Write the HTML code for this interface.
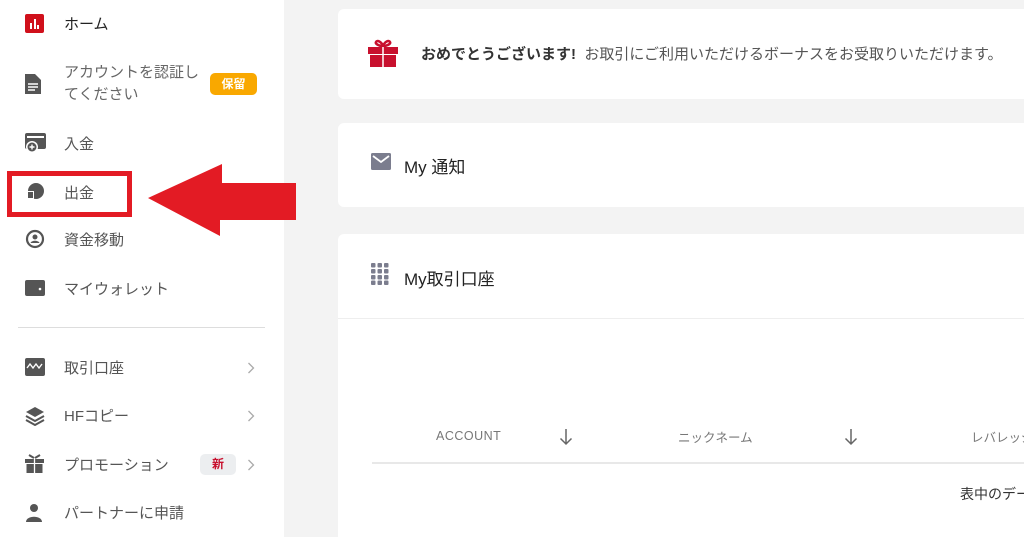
<!DOCTYPE html>
<html><head><meta charset="utf-8"><style>
*{margin:0;padding:0;box-sizing:border-box}
html,body{width:1024px;height:537px;overflow:hidden}
body{background:#f3f3f3;font-family:"Liberation Sans","Noto Sans CJK JP",sans-serif;position:relative}
.side{position:absolute;left:0;top:0;width:284px;height:537px;background:#fff}
.it{position:absolute;left:64px;font-size:15px;color:#555}
.ic{position:absolute;left:25px}
.chev{position:absolute;left:247px}
.card{position:absolute;left:338px;width:700px;background:#fff;border-radius:6px}
.abs{position:absolute}
</style></head><body>
<div class="side">
<div class="ic" style="top:14px;width:19px;height:19px;background:#d0101b;border-radius:2px"><div class="abs" style="left:5px;top:9px;width:2px;height:6px;background:#fff"></div><div class="abs" style="left:8.5px;top:5px;width:2px;height:10px;background:#fff"></div><div class="abs" style="left:12px;top:11px;width:2px;height:4px;background:#fff"></div></div>
<div class="it" style="top:13px;color:#222">ホーム</div>
<svg class="ic" style="top:74px" width="16" height="20" viewBox="0 0 16 20"><path d="M0 0h10l6 6v14H0z" fill="#555"/><path d="M3 10h10M3 13h10M3 16h7" stroke="#fff" stroke-width="1.5"/></svg>
<div class="it" style="top:62px;line-height:22px;color:#666">アカウントを認証し<br>てください</div>
<div class="abs" style="left:210px;top:73px;width:47px;height:22px;background:#f9a800;border-radius:5px;color:#fff;font-size:12px;text-align:center;line-height:22px;font-weight:bold">保留</div>
<svg class="ic" style="top:133px" width="22" height="20" viewBox="0 0 22 20"><rect x="0" y="0" width="21" height="16" rx="2" fill="#555"/><rect x="2" y="3" width="17" height="2" fill="#fff"/><circle cx="7" cy="14" r="6" fill="#fff"/><circle cx="7" cy="14" r="4.5" fill="#555"/><path d="M7 11.5v5M4.5 14h5" stroke="#fff" stroke-width="1.4"/></svg>
<div class="it" style="top:133px">入金</div>
<svg class="ic" style="top:182px" width="20" height="20" viewBox="0 0 20 20"><circle cx="11" cy="9" r="8" fill="#555"/><path d="M2 9h7v8H2z" fill="#fff"/><path d="M3 10h5v6H3z" fill="#555"/></svg>
<div class="it" style="top:182px">出金</div>
<div class="abs" style="left:7px;top:171px;width:125px;height:46px;border:5px solid #e31b24"></div>
<svg class="ic" style="top:229px" width="20" height="20" viewBox="0 0 20 20"><circle cx="10" cy="10" r="8" fill="none" stroke="#555" stroke-width="2.2"/><circle cx="10" cy="8" r="2.5" fill="#555"/><path d="M5.5 14c1-3 8-3 9 0z" fill="#555"/></svg>
<div class="it" style="top:229px">資金移動</div>
<svg class="ic" style="top:279px" width="20" height="18" viewBox="0 0 20 18"><rect x="0" y="1" width="20" height="16" rx="2" fill="#555"/><circle cx="15" cy="10" r="1.3" fill="#fff"/></svg>
<div class="it" style="top:278px">マイウォレット</div>
<div class="abs" style="left:18px;top:327px;width:247px;height:1px;background:#ddd"></div>
<svg class="ic" style="top:358px" width="20" height="18" viewBox="0 0 20 18"><rect width="20" height="18" rx="2" fill="#555"/><path d="M2 10l3-4 3 4 3-4 3 4 3-4" stroke="#fff" stroke-width="1.4" fill="none"/></svg>
<div class="it" style="top:357px">取引口座</div>
<svg class="chev" style="top:362px" width="8" height="12"><path d="M1.5 1l5 5-5 5" stroke="#aaa" stroke-width="1.3" fill="none"/></svg>
<svg class="ic" style="top:406px" width="20" height="20" viewBox="0 0 20 20"><path d="M10 1l9 5-9 5-9-5z" fill="#555"/><path d="M1 10l9 5 9-5M1 14l9 5 9-5" stroke="#555" stroke-width="2" fill="none"/></svg>
<div class="it" style="top:405px">HFコピー</div>
<svg class="chev" style="top:410px" width="8" height="12"><path d="M1.5 1l5 5-5 5" stroke="#aaa" stroke-width="1.3" fill="none"/></svg>
<svg class="ic" style="top:454px" width="19" height="19" viewBox="0 0 19 19"><rect x="0" y="5" width="19" height="4" fill="#555"/><rect x="1.5" y="10" width="16" height="9" fill="#555"/><path d="M9.5 4v15" stroke="#fff" stroke-width="1.3"/><path d="M4 1l5 3M15 1l-5 3" stroke="#555" stroke-width="2"/></svg>
<div class="it" style="top:454px">プロモーション</div>
<div class="abs" style="left:200px;top:454px;width:36px;height:21px;background:#eceef0;border-radius:5px;color:#c8102e;font-size:12px;text-align:center;line-height:21px;font-weight:bold">新</div>
<svg class="chev" style="top:459px" width="8" height="12"><path d="M1.5 1l5 5-5 5" stroke="#aaa" stroke-width="1.3" fill="none"/></svg>
<svg class="ic" style="top:503px" width="18" height="20" viewBox="0 0 18 20"><circle cx="9" cy="5" r="4" fill="#555"/><path d="M1 19c0-7 16-7 16 0z" fill="#555"/></svg>
<div class="it" style="top:502px">パートナーに申請</div>
</div>
<svg class="abs" style="left:0;top:0" width="300" height="250"><path d="M148 198L222 164V183H296V220H220V236Z" fill="#e31b24"/></svg>
<div class="card" style="top:9px;height:90px">
<svg class="abs" style="left:30px;top:28px" width="30" height="30" viewBox="0 0 30 30"><path d="M15 9C13 4 9 3 8 5c-1 2 3 4 7 4c4 0 8-2 7-4c-1-2-5-1-7 4" stroke="#c8102e" stroke-width="2.5" fill="none"/><rect x="0" y="10" width="30" height="7" fill="#c8102e"/><rect x="2" y="18" width="26" height="12" fill="#c8102e"/><path d="M15 10v20" stroke="#fff" stroke-width="1.5"/></svg>
<div class="abs" style="left:83px;top:34px;font-size:15px;color:#333;white-space:nowrap"><b>おめでとうございます!</b>&nbsp; <span style="color:#555">お取引にご利用いただけるボーナスをお受取りいただけます。</span></div>
</div>
<div class="card" style="top:123px;height:84px">
<svg class="abs" style="left:33px;top:30px" width="20" height="17" viewBox="0 0 20 17"><rect width="20" height="17" rx="1.5" fill="#7b7d8e"/><path d="M2 3l8 6 8-6" stroke="#fff" stroke-width="1.8" fill="none"/></svg>
<div class="abs" style="left:66px;top:30px;font-size:17px;color:#222">My 通知</div>
</div>
<div class="card" style="top:234px;height:303px;border-radius:6px 0 0 0">
<svg class="abs" style="left:33px;top:29px" width="18" height="22" viewBox="0 0 18 22"><g fill="#7b7d8e"><rect x="0" y="0" width="4.5" height="4.5" rx="1"/><rect x="6.5" y="0" width="4.5" height="4.5" rx="1"/><rect x="13" y="0" width="4.5" height="4.5" rx="1"/><rect x="0" y="6" width="4.5" height="4.5" rx="1"/><rect x="6.5" y="6" width="4.5" height="4.5" rx="1"/><rect x="13" y="6" width="4.5" height="4.5" rx="1"/><rect x="0" y="12" width="4.5" height="4.5" rx="1"/><rect x="6.5" y="12" width="4.5" height="4.5" rx="1"/><rect x="13" y="12" width="4.5" height="4.5" rx="1"/><rect x="0" y="17.5" width="4.5" height="4.5" rx="1"/><rect x="6.5" y="17.5" width="4.5" height="4.5" rx="1"/><rect x="13" y="17.5" width="4.5" height="4.5" rx="1"/></g></svg>
<div class="abs" style="left:66px;top:31px;font-size:17px;color:#222">My取引口座</div>
<div class="abs" style="left:0;top:84px;width:700px;height:1px;background:#eee"></div>
<div class="abs" style="left:98px;top:195px;font-size:12.5px;color:#777;letter-spacing:0.5px">ACCOUNT</div>
<svg class="abs" style="left:221px;top:194px" width="14" height="18"><path d="M7 1v15M1.5 10.5L7 16l5.5-5.5" stroke="#666" stroke-width="1.5" fill="none"/></svg>
<div class="abs" style="left:340px;top:193px;font-size:12.5px;color:#777">ニックネーム</div>
<svg class="abs" style="left:506px;top:194px" width="14" height="18"><path d="M7 1v15M1.5 10.5L7 16l5.5-5.5" stroke="#666" stroke-width="1.5" fill="none"/></svg>
<div class="abs" style="left:633px;top:193px;font-size:12.5px;color:#777;white-space:nowrap">レバレッジ</div>
<div class="abs" style="left:34px;top:228px;width:680px;height:1.5px;background:#e8e8e8"></div>
<div class="abs" style="left:622px;top:250px;font-size:14px;color:#333;white-space:nowrap">表中のデータ</div>
</div>
</body></html>
